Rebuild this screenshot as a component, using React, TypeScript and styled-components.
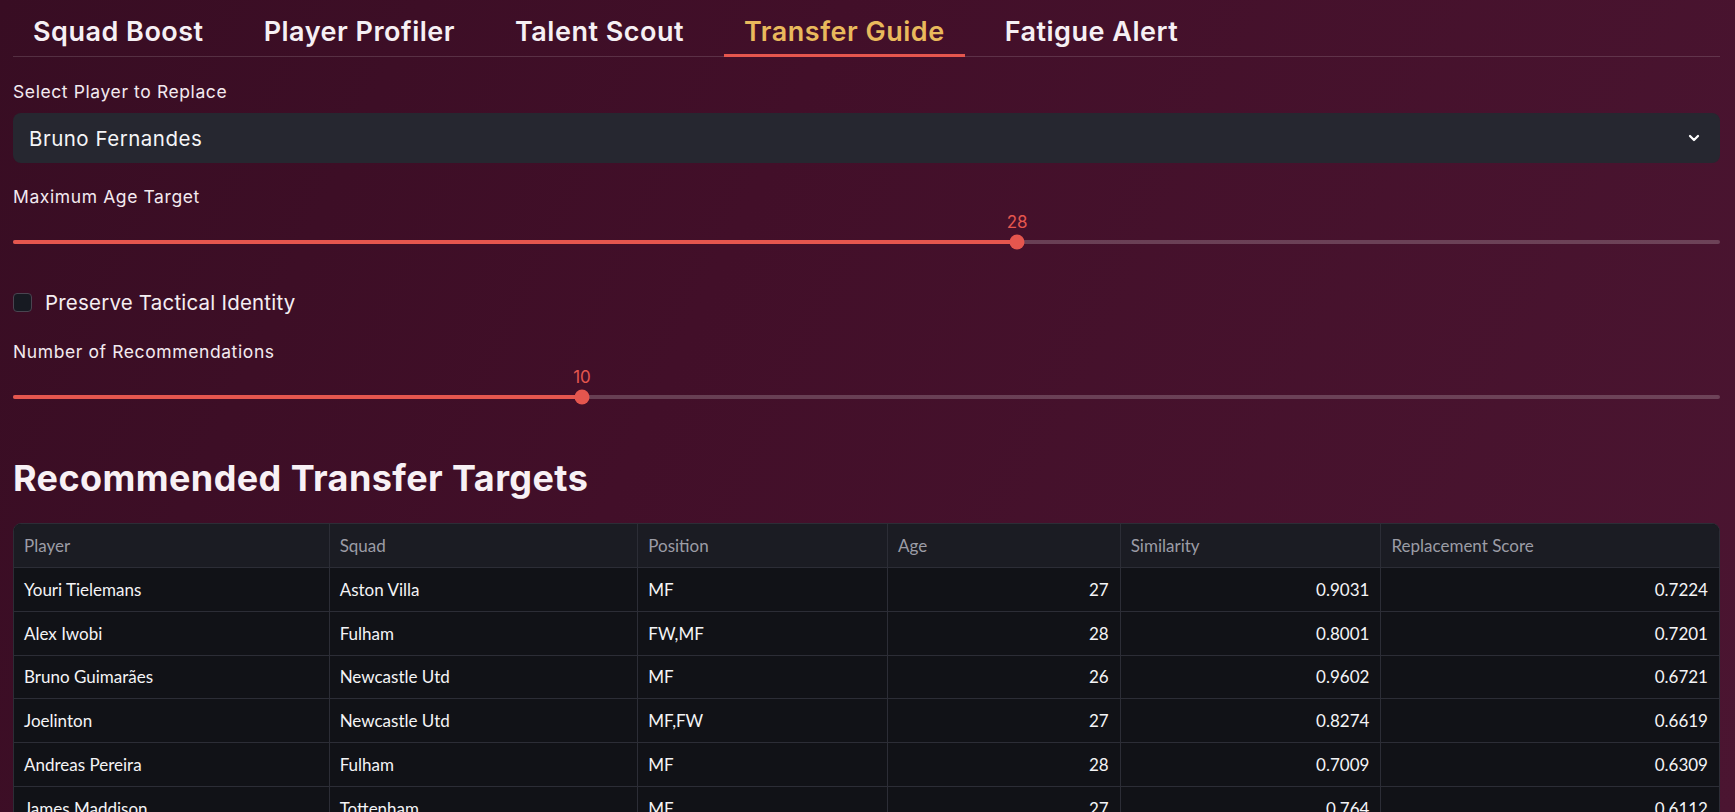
import React from "react";
import styled, { createGlobalStyle } from "styled-components";

const GlobalStyle = createGlobalStyle`
  html, body {
    margin: 0;
    padding: 0;
    height: 100%;
    overflow: hidden;
  }
  body {
    background: linear-gradient(115deg, #380d23 0%, #420f29 40%, #4b1531 100%);
    color: #fafafa;
    font-family: Inter, "Open Sans", sans-serif;
  }
  #root { min-height: 100vh; }
`;

const HEAD_FONT = `Inter, "Open Sans", sans-serif`;
const TABLE_FONT = `Lato, "Noto Sans", sans-serif`;
const ACCENT = "#e5564e";

const Page = styled.main`
  padding: 0 15px 0 13px;
  display: flex;
  flex-direction: column;
`;

const TabBar = styled.nav`
  display: flex;
  gap: 20px;
  height: 56px;
  border-bottom: 1px solid rgba(255, 255, 255, 0.14);
`;

const Tab = styled.button<{ $active?: boolean }>`
  background: none;
  border: none;
  padding: 9px 20px 0;
  height: 57px;
  margin-bottom: -1px;
  font-family: ${HEAD_FONT};
  font-weight: 600;
  font-size: 27px;
  letter-spacing: 0.5px;
  color: ${(p) => (p.$active ? "#e9b95c" : "#f6f0f4")};
  border-bottom: 3px solid ${(p) => (p.$active ? ACCENT : "transparent")};
  cursor: pointer;
  white-space: nowrap;
`;

const Label = styled.div<{ $mt: number }>`
  margin-top: ${(p) => p.$mt}px;
  font-family: ${HEAD_FONT};
  font-size: 17.5px;
  letter-spacing: 0.6px;
  line-height: 24px;
  color: #f3eaf0;
`;

const Select = styled.div`
  margin-top: 9px;
  height: 50px;
  border-radius: 8px;
  background: #262730;
  display: flex;
  align-items: center;
  justify-content: space-between;
  padding: 0 18px 0 16px;
  font-family: ${HEAD_FONT};
  font-size: 20.5px;
  letter-spacing: 0.5px;
  color: #f5f5f7;
`;

const Chevron = () => (
  <svg width="16" height="16" viewBox="0 0 24 24" fill="none" stroke="#ffffff" strokeWidth="3.4" strokeLinecap="round" strokeLinejoin="round">
    <path d="M6 9l6 6 6-6" />
  </svg>
);

const SliderWrap = styled.div`
  margin-top: 2px;
  display: flex;
  flex-direction: column;
`;

const ValueRow = styled.div`
  position: relative;
  height: 20px;
`;

const ValueText = styled.span`
  position: absolute;
  top: 1px;
  transform: translateX(-50%);
  font-family: ${HEAD_FONT};
  font-size: 17px;
  line-height: 20px;
  color: ${ACCENT};
`;

const TrackArea = styled.div`
  position: relative;
  height: 22px;
  display: flex;
  align-items: center;
`;

const Track = styled.div`
  width: 100%;
  height: 4px;
  border-radius: 2px;
  background: rgba(255, 255, 255, 0.2);
  overflow: hidden;
`;

const Fill = styled.div`
  height: 100%;
  background: ${ACCENT};
`;

const Thumb = styled.div`
  position: absolute;
  top: 50%;
  width: 15px;
  height: 15px;
  border-radius: 50%;
  background: ${ACCENT};
  transform: translate(-50%, -50%);
`;

const Slider = ({ min, max, value }: { min: number; max: number; value: number }) => {
  const pct = ((value - min) / (max - min)) * 100;
  return (
    <SliderWrap>
      <ValueRow>
        <ValueText style={{ left: `${pct}%` }}>{value}</ValueText>
      </ValueRow>
      <TrackArea>
        <Track>
          <Fill style={{ width: `${pct}%` }} />
        </Track>
        <Thumb style={{ left: `${pct}%` }} />
      </TrackArea>
    </SliderWrap>
  );
};

const CheckRow = styled.label`
  margin-top: 37px;
  display: flex;
  align-items: center;
  gap: 13px;
  height: 24px;
  font-family: ${HEAD_FONT};
  font-size: 20.5px;
  letter-spacing: 0.2px;
  color: #f5eef2;
`;

const Box = styled.span`
  width: 19px;
  height: 19px;
  box-sizing: border-box;
  border-radius: 4px;
  background: #171a22;
  border: 1px solid #4a4450;
`;

const Heading = styled.h2`
  margin: 46px 0 0;
  font-family: ${HEAD_FONT};
  font-weight: 700;
  font-size: 36px;
  line-height: 48px;
  color: #f8f1f5;
  letter-spacing: 0.4px;
`;

const Table = styled.div`
  margin-top: 21px;
  border: 1px solid #2c2d36;
  border-radius: 8px;
  overflow: hidden;
  display: grid;
  grid-template-columns: 316fr 309fr 250fr 233fr 261fr 338fr;
  background: #111217;
  font-family: ${TABLE_FONT};
  font-size: 17px;
`;

const HeadCell = styled.div`
  height: 43px;
  display: flex;
  align-items: center;
  padding: 0 10px;
  background: #1b1c23;
  color: #9c9ca6;
  border-right: 1px solid #2c2d36;
  border-bottom: 1px solid #2c2d36;
  &:nth-child(6n) { border-right: none; }
`;

const Cell = styled.div<{ $num?: boolean }>`
  height: 43.75px;
  box-sizing: border-box;
  display: flex;
  align-items: center;
  justify-content: ${(p) => (p.$num ? "flex-end" : "flex-start")};
  padding: 0 11px 0 10px;
  color: #f4f4f6;
  border-right: 1px solid #2c2d36;
  border-bottom: 1px solid #2c2d36;
  &:nth-child(6n) { border-right: none; }
`;

const tabs = ["Squad Boost", "Player Profiler", "Talent Scout", "Transfer Guide", "Fatigue Alert"];
const headers = ["Player", "Squad", "Position", "Age", "Similarity", "Replacement Score"];
const rows: [string, string, string, string, string, string][] = [
  ["Youri Tielemans", "Aston Villa", "MF", "27", "0.9031", "0.7224"],
  ["Alex Iwobi", "Fulham", "FW,MF", "28", "0.8001", "0.7201"],
  ["Bruno Guimarães", "Newcastle Utd", "MF", "26", "0.9602", "0.6721"],
  ["Joelinton", "Newcastle Utd", "MF,FW", "27", "0.8274", "0.6619"],
  ["Andreas Pereira", "Fulham", "MF", "28", "0.7009", "0.6309"],
  ["James Maddison", "Tottenham", "MF", "27", "0.764", "0.6112"],
];

export default function App() {
  return (
    <>
      <GlobalStyle />
      <Page>
        <TabBar>
          {tabs.map((t) => (
            <Tab key={t} $active={t === "Transfer Guide"}>
              {t}
            </Tab>
          ))}
        </TabBar>
        <Label $mt={23}>Select Player to Replace</Label>
        <Select>
          <span>Bruno Fernandes</span>
          <Chevron />
        </Select>
        <Label $mt={22}>Maximum Age Target</Label>
        <Slider min={18} max={35} value={28} />
        <CheckRow>
          <Box />
          Preserve Tactical Identity
        </CheckRow>
        <Label $mt={26}>Number of Recommendations</Label>
        <Slider min={5} max={20} value={10} />
        <Heading>Recommended Transfer Targets</Heading>
        <Table>
          {headers.map((h) => (
            <HeadCell key={h}>{h}</HeadCell>
          ))}
          {rows.map((r) =>
            r.map((c, i) => (
              <Cell key={r[0] + i} $num={i >= 3}>
                {c}
              </Cell>
            ))
          )}
        </Table>
      </Page>
    </>
  );
}
